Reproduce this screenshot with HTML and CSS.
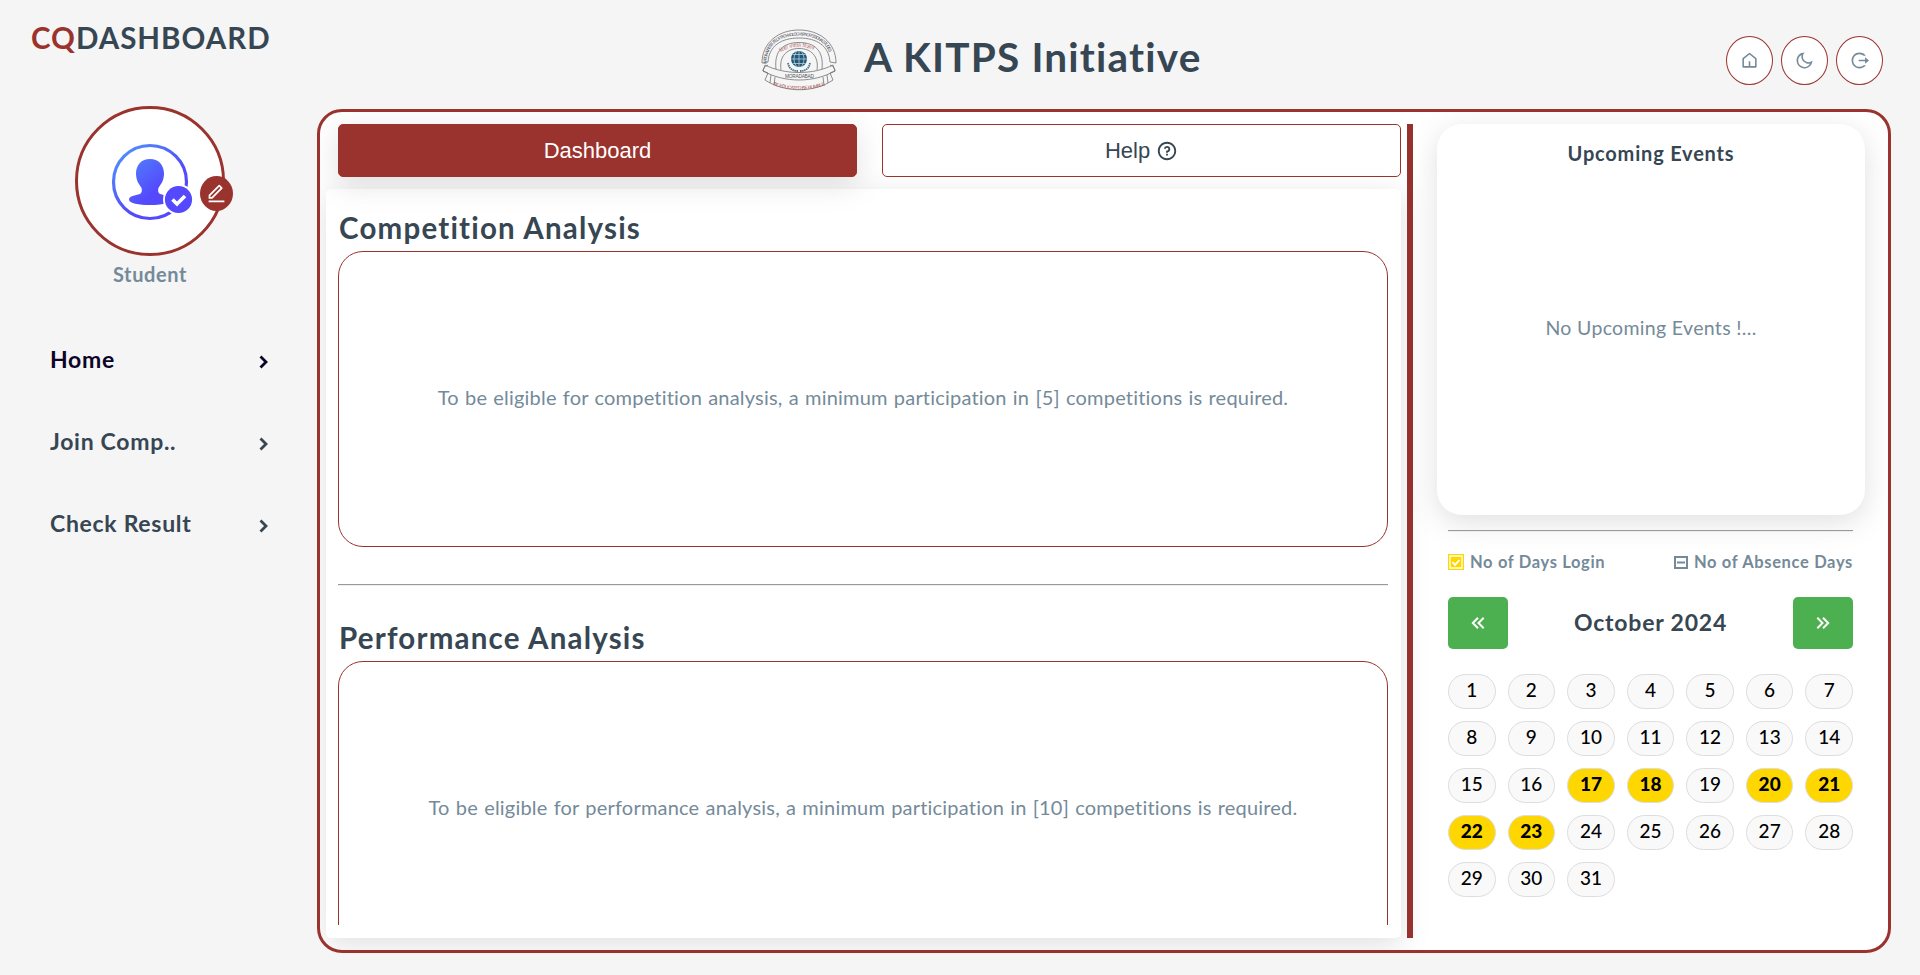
FILE: index.html
```
<!DOCTYPE html>
<html lang="en">
<head>
<meta charset="utf-8">
<title>CQ Dashboard</title>
<link rel="stylesheet" href="styles.css">
</head>
<body>
<aside class="sidebar">
  <h1 class="brand"><span class="brand-accent">CQ</span>DASHBOARD</h1>
  <div class="avatar">
    <svg class="avatar-img" viewBox="0 0 76 76">
      <defs><linearGradient id="blue" gradientUnits="userSpaceOnUse" x1="12" y1="6" x2="46" y2="46"><stop offset="0" stop-color="#4f8dfc"/><stop offset="1" stop-color="#5449fc"/></linearGradient></defs>
      <circle cx="38" cy="38" r="36.500" fill="none" stroke="url(#blue)" stroke-width="3.200"/>
      <path fill="url(#blue)" d="M38 15c8.500 0 14 6 14 14.500 0 6.500-2.500 10-5 13.500-1.500 2.500-1 6 1 7 5 1.500 11 2 11 5.500 0 4-10 5.500-21 5.500s-21-1.500-21-5.500c0-3.500 6-4 11-5.500 2-1 2.500-4.500 1-7-2.500-3.500-5-7-5-13.500C24 21 29.500 15 38 15z"/>
      <circle cx="66.500" cy="55.500" r="15.500" fill="#fff"/>
      <circle cx="66.500" cy="55.500" r="13.600" fill="#5449fc"/>
      <path d="M60.500 55.500l4.500 4.500 8-8" fill="none" stroke="#fff" stroke-width="3.600"/>
    </svg>
    <span class="avatar-edit"><svg class="icon" viewBox="0 0 24 24"><path d="M6.414 15.890L16.556 5.748l-1.414-1.414L5 14.476v1.414h1.414zm.829 2H3v-4.243L14.435 2.212a1 1 0 0 1 1.414 0l2.829 2.829a1 1 0 0 1 0 1.414L7.243 17.890zM3 19.890h18v2H3v-2z"/></svg></span>
  </div>
  <p class="role">Student</p>
  <nav class="menu">
    <a class="menu-item menu-item-active">Home<svg class="chevron" viewBox="0 0 10 14"><path d="M1.500 1.500L7 7l-5.500 5.500"/></svg></a>
    <a class="menu-item">Join Comp..<svg class="chevron" viewBox="0 0 10 14"><path d="M1.500 1.500L7 7l-5.500 5.500"/></svg></a>
    <a class="menu-item">Check Result<svg class="chevron" viewBox="0 0 10 14"><path d="M1.500 1.500L7 7l-5.500 5.500"/></svg></a>
  </nav>
</aside>

<div class="page">
  <header class="topbar">
    <div class="title-group">
      <svg class="crest" viewBox="0 0 76 62" fill="none" stroke="#6a6a6a" stroke-width=".75">
        <path d="M1 34C1 14 17 1 38 1s37 13 37 33l-6-1M1 34l6-1M7 33C8 17 20 9 38 9s30 8 31 24M15 40C13 22 22 13.500 38 13.500s25 8.500 23 26.500M20 41c-2-14 6-21.500 18-21.500s20 7.500 18 21.500"/>
        <path d="M4 36l-2 6 5 2-3 7c20 13 49 13 68 0l-3-7 5-2-2-6M7 36C3 38 2 40 2 42c22 12 50 12 72 0 0-2-1-4-5-6M4 36c20 10 48 10 68 0M10 46l-1 8M14 48l-1 8M66 46l1 8M62 48l1 8"/>
        <path id="arc-top" stroke="none" d="M5.500 35C5 16 19 6.500 38 6.500s32.500 9.500 32 28.500"/>
        <path id="arc-in" stroke="none" d="M18 26C25 15.500 51 15.500 58 26"/>
        <path id="arc-low" stroke="none" d="M12 56c17 6 35 6 53 0"/>
        <g stroke="none" class="crest-text">
          <text font-size="4.400" fill="#556"><textPath href="#arc-top" textLength="86">NATIONAL INSTITUTE OF TECHNOLOGY &amp; PROFESSIONAL STUDIES</textPath></text>
          <text font-size="5" fill="#b56a68"><textPath href="#arc-in" startOffset="3">विद्या ज्योति विज्ञानं</textPath></text>
          <text x="24" y="49" font-size="4.800" fill="#556" textLength="29">MORADABAD</text>
          <text font-size="4.800" fill="#a8504e"><textPath href="#arc-low" textLength="53">BE EDUCATED BE HUMBLE</textPath></text>
        </g>
        <circle cx="38" cy="30" r="8" fill="#1f5878" stroke="none"/>
        <path stroke="#b9d0dd" stroke-width=".8" d="M38 22v16M30 30h16M32 25.500h12M32 34.500h12M36 22c-4 5-4 11 0 16M40 22c4 5 4 11 0 16"/>
        <path stroke="#4c7587" stroke-width="1.800" stroke-dasharray="1.500 .6" d="M27 34c1 6 5 8 10 8M49 34c-1 6-5 8-10 8"/>
      </svg>
      <h2 class="title">A KITPS Initiative</h2>
    </div>
    <div class="actions">
      <a class="round"><svg class="icon" viewBox="0 0 24 24"><path d="M13 19h6V9.978l-7-5.444-7 5.444V19h6v-6h2v6zm8 1a1 1 0 0 1-1 1H4a1 1 0 0 1-1-1V9.489a1 1 0 0 1 .386-.789l8-6.222a1 1 0 0 1 1.228 0l8 6.222a1 1 0 0 1 .386.789V20z"/></svg></a>
      <a class="round"><svg class="icon" viewBox="0 0 24 24"><path d="M10 7a7 7 0 0 0 12 4.900v.1c0 5.523-4.477 10-10 10S2 17.523 2 12 6.477 2 12 2h.1A6.979 6.979 0 0 0 10 7zm-6 5a8 8 0 0 0 15.062 3.762A9 9 0 0 1 8.238 4.938 7.999 7.999 0 0 0 4 12z"/></svg></a>
      <a class="round"><svg class="icon" viewBox="0 0 24 24"><path d="M12 22C6.477 22 2 17.523 2 12S6.477 2 12 2a9.985 9.985 0 0 1 8 4h-2.710a8 8 0 1 0 .001 12h2.710A9.985 9.985 0 0 1 12 22zm7-6v-3h-8v-2h8V8l5 4-5 4z"/></svg></a>
    </div>
  </header>

  <main class="shell">
    <section class="left">
      <div class="tabs">
        <button class="tab tab-active">Dashboard</button>
        <button class="tab">Help <svg class="icon" viewBox="0 0 24 24"><path d="M12 22C6.477 22 2 17.523 2 12S6.477 2 12 2s10 4.477 10 10-4.477 10-10 10zm0-2a8 8 0 1 0 0-16 8 8 0 0 0 0 16zm-1-5h2v2h-2v-2zm2-1.645V14h-2v-1.500a1 1 0 0 1 1-1 1.500 1.500 0 1 0-1.471-1.794l-1.962-.393A3.501 3.501 0 1 1 13 13.355z"/></svg></button>
      </div>
      <div class="panel">
        <div class="scroll">
          <h3 class="heading">Competition Analysis</h3>
          <div class="chart"><p class="note">To be eligible for competition analysis, a minimum participation in [5] competitions is required.</p></div>
          <hr class="split">
          <h3 class="heading">Performance Analysis</h3>
          <div class="chart"><p class="note">To be eligible for performance analysis, a minimum participation in [10] competitions is required.</p></div>
        </div>
      </div>
    </section>
    <div class="bar"></div>
    <section class="right">
      <div class="events">
        <h4 class="events-title">Upcoming Events</h4>
        <p class="events-empty">No Upcoming Events !...</p>
      </div>
      <div class="calendar">
        <hr class="line">
        <div class="legend">
          <span class="legend-item"><svg class="legend-login" viewBox="0 0 16 16"><path fill="#ffd700" d="M0 0h16v16H0z"/><path fill="none" stroke="#fff" stroke-width="1.300" d="M2 2h12v12H2z"/><path fill="none" stroke="#fff" stroke-width="1.800" d="M4.500 8l2.500 2.800L11.500 6"/></svg>No of Days Login</span>
          <span class="legend-item"><svg class="legend-absent" viewBox="0 0 14 13"><path fill="none" stroke="currentColor" stroke-width="2" d="M1 1h12v11H1zM3 6.500h8"/></svg>No of Absence Days</span>
        </div>
        <div class="month">
          <button class="step"><svg viewBox="0 0 14 12"><path d="M7 .8L1.800 6 7 11.200M12.700 .8L7.500 6l5.200 5.200"/></svg></button>
          <h4 class="month-name">October 2024</h4>
          <button class="step"><svg viewBox="0 0 14 12"><path d="M1.300 .8L6.500 6l-5.200 5.200M7 .8L12.200 6 7 11.200"/></svg></button>
        </div>
        <div class="days">
          <span class="day">1</span><span class="day">2</span><span class="day">3</span><span class="day">4</span><span class="day">5</span><span class="day">6</span><span class="day">7</span>
          <span class="day">8</span><span class="day">9</span><span class="day">10</span><span class="day">11</span><span class="day">12</span><span class="day">13</span><span class="day">14</span>
          <span class="day">15</span><span class="day">16</span><span class="day day-on">17</span><span class="day day-on">18</span><span class="day">19</span><span class="day day-on">20</span><span class="day day-on">21</span>
          <span class="day day-on">22</span><span class="day day-on">23</span><span class="day">24</span><span class="day">25</span><span class="day">26</span><span class="day">27</span><span class="day">28</span>
          <span class="day">29</span><span class="day">30</span><span class="day">31</span>
        </div>
      </div>
    </section>
  </main>
</div>
</body>
</html>
```
FILE: styles.css
```
* { box-sizing: border-box; margin: 0; padding: 0; }

:root {
  --red: #9a332d;
  --ink: #364652;
  --muted: #748a99;
  --shadow: 0 7px 29px rgba(100, 100, 111, .2);
}

body {
  display: grid;
  grid-template-columns: 317px 1574px;
  height: 975px;
  overflow: hidden;
  background: #f5f5f5;
  color: var(--ink);
  font-family: Lato, "Noto Sans", sans-serif;
  font-variant-ligatures: none;
}

hr { border: 0; border-top: 1px solid #999; border-bottom: 1px solid #eee; }

.icon { fill: currentColor; }

/* Sidebar */
.sidebar { display: flex; flex-direction: column; }
.brand { margin: 20.500px 0 0 31px; font-size: 29.500px; line-height: 34px; letter-spacing: 1px; }
.brand-accent { color: var(--red); }
.avatar {
  position: relative;
  display: grid;
  place-items: center;
  width: 150px;
  height: 150px;
  margin: 51.500px 0 0 75px;
  border: 3px solid var(--red);
  border-radius: 50%;
  background: #fff;
}
.avatar-img { width: 76px; height: 76px; margin-top: 2px; overflow: visible; }
.avatar-edit {
  position: absolute;
  left: 122px;
  top: 67px;
  display: grid;
  place-items: center;
  width: 33px;
  height: 35px;
  border-radius: 50%;
  background: var(--red);
  color: #fff;
}
.avatar-edit .icon { width: 21px; height: 21px; }
.role { width: 300px; margin-top: 5px; color: var(--muted); font-size: 20px; font-weight: 700; line-height: 26px; letter-spacing: .6px; text-align: center; }
.menu { display: flex; flex-direction: column; gap: 50px; margin: 56px 0 0 50px; width: 220px; }
.menu-item { display: flex; justify-content: space-between; align-items: center; height: 32px; font-size: 23px; font-weight: 700; letter-spacing: .7px; }
.menu-item-active { color: #0d0528; }
.chevron { width: 10px; height: 14px; margin: 5px 1px 0 0; fill: none; stroke: currentColor; stroke-width: 2.800; }

/* Top bar */
.topbar { display: flex; justify-content: space-between; height: 109px; }
.title-group { display: flex; gap: 27px; margin-left: 444px; }
.crest { width: 76px; height: 62px; margin-top: 29px; }
.crest-text { font-family: "Liberation Sans", "Noto Sans", sans-serif; }
.title { margin-top: 33px; font-size: 40.500px; line-height: 48px; letter-spacing: 1.200px; }
.actions { display: flex; gap: 8px; padding: 36px 8px 0 0; }
.round { display: grid; place-items: center; width: 47px; height: 49px; border: 1px solid var(--red); border-radius: 50%; background: #fff; color: var(--muted); }
.round .icon { width: 19px; height: 19px; }

/* Main frame */
.shell {
  display: flex;
  height: 844px;
  padding: 12px 23px 12px 6px;
  border: 3px solid var(--red);
  border-radius: 25px;
  background: #fff;
  overflow: hidden;
}
.left { width: 1075px; }
.tabs { display: grid; grid-template-columns: 519px 519px; gap: 25px; margin-left: 12px; }
.tab {
  display: flex;
  justify-content: center;
  align-items: center;
  gap: 6px;
  height: 53px;
  border: 1px solid var(--red);
  border-radius: 5px;
  background: transparent;
  color: var(--ink);
  font: 22px "Liberation Sans", Arial, sans-serif;
}
.tab .icon { width: 22px; height: 22px; }
.tab-active { background: var(--red); color: #fff; box-shadow: var(--shadow); }
.panel { height: 749px; margin-top: 12px; padding: 13px 12px; border-radius: 5px; background: #fff; box-shadow: var(--shadow); }
.scroll { height: 723px; overflow: hidden; }
.heading { margin: 7px 0 0 1px; height: 42px; font-size: 29.500px; line-height: 38px; letter-spacing: 1.200px; white-space: nowrap; }
.chart { display: grid; place-items: center; width: 1050px; height: 296px; padding-bottom: 4px; border: 1px solid var(--red); border-radius: 25px; }
.note { color: var(--muted); font-size: 20px; letter-spacing: .2px; word-spacing: .85px; }
.split { margin: 37px 0 33px; width: 1050px; }
.bar { width: 6px; height: 814px; margin: 0 24px 0 6px; background: #96312d; }

/* Right column */
.right { width: 428px; }
.events { height: 391px; padding-top: 16px; border-radius: 25px; background: #fff; box-shadow: var(--shadow); text-align: center; }
.events-title { font-size: 20px; line-height: 26px; letter-spacing: .8px; }
.events-empty { margin-top: 149px; color: var(--muted); font-size: 19.500px; line-height: 26px; letter-spacing: .33px; }
.calendar { width: 405px; margin: 15px 0 0 11px; }
.legend { display: flex; justify-content: space-between; margin-top: 18px; color: var(--muted); font-size: 16.500px; font-weight: 700; line-height: 24px; letter-spacing: .65px; }
.legend-item { display: flex; align-items: center; }
.legend-login { width: 16px; height: 16px; margin-right: 6px; }
.legend-absent { width: 14px; height: 13px; margin-right: 6px; }
.month { display: flex; justify-content: space-between; align-items: center; margin-top: 23px; height: 52px; }
.month-name { margin-bottom: 3px; font-size: 23px; line-height: 28px; letter-spacing: .8px; }
.step { display: grid; place-items: center; width: 60px; height: 52px; border: 0; border-radius: 5px; background: #4caf50; }
.step svg { width: 14px; height: 12px; fill: none; stroke: #fff; stroke-width: 2; }
.days { display: grid; grid-template-columns: repeat(7, 1fr); gap: 12px; margin-top: 25px; }
.day { height: 35px; border: 1px solid #ddd; border-radius: 20px; background: #f9f9f9; color: #000; font-size: 19px; font-weight: 500; line-height: 29px; text-align: center; }
.day-on { background: #ffd700; font-weight: 900; }
```
